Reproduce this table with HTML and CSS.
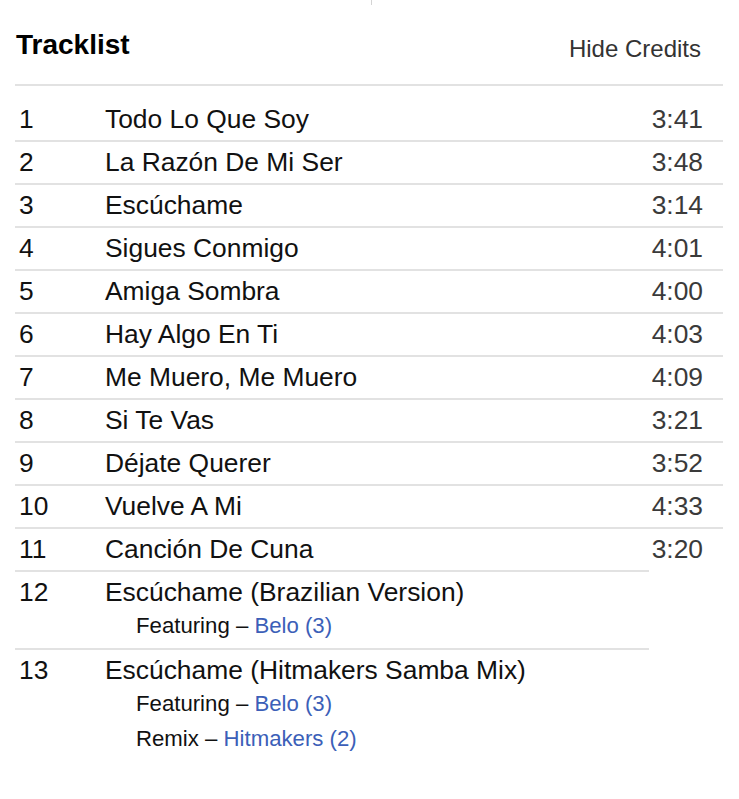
FILE: index.html
```html
<!DOCTYPE html>
<html lang="es">
<head>
<meta charset="utf-8">
<title>Tracklist</title>
<link rel="stylesheet" href="styles.css">
</head>
<body>
<div class="page">
  <div class="tick"></div>
  <header class="head">
    <h2 class="title">Tracklist</h2>
    <span class="toggle">Hide Credits</span>
  </header>
  <div class="tracks">
    <div class="num first">1</div><div class="name first">Todo Lo Que Soy</div><div class="dur first">3:41</div>
    <div class="num">2</div><div class="name">La Razón De Mi Ser</div><div class="dur">3:48</div>
    <div class="num">3</div><div class="name">Escúchame</div><div class="dur">3:14</div>
    <div class="num">4</div><div class="name">Sigues Conmigo</div><div class="dur">4:01</div>
    <div class="num">5</div><div class="name">Amiga Sombra</div><div class="dur">4:00</div>
    <div class="num">6</div><div class="name">Hay Algo En Ti</div><div class="dur">4:03</div>
    <div class="num">7</div><div class="name">Me Muero, Me Muero</div><div class="dur">4:09</div>
    <div class="num">8</div><div class="name">Si Te Vas</div><div class="dur">3:21</div>
    <div class="num">9</div><div class="name">Déjate Querer</div><div class="dur">3:52</div>
    <div class="num">10</div><div class="name">Vuelve A Mi</div><div class="dur">4:33</div>
    <div class="num">11</div><div class="name">Canción De Cuna</div><div class="dur">3:20</div>
    <div class="num">12</div>
    <div class="name">Escúchame (Brazilian Version)
      <div class="credits">
        <div class="credit">Featuring – <span class="link">Belo (3)</span></div>
      </div>
    </div>
    <div class="dur empty"></div>
    <div class="num">13</div>
    <div class="name">Escúchame (Hitmakers Samba Mix)
      <div class="credits">
        <div class="credit">Featuring – <span class="link">Belo (3)</span></div>
        <div class="credit">Remix – <span class="link">Hitmakers (2)</span></div>
      </div>
    </div>
    <div class="dur empty"></div>
  </div>
</div>
</body>
</html>
```
FILE: styles.css
```css
html, body {
  margin: 0;
  padding: 0;
  background: #fff;
}
body {
  font-family: "Liberation Sans", Arial, sans-serif;
  color: #111;
}
.page {
  position: relative;
  width: 708px;
  margin-left: 15px;
}
.tick {
  position: absolute;
  left: 356px;
  top: 0;
  width: 1px;
  height: 5px;
  background: #d4d4d4;
}
.head {
  display: flex;
  justify-content: space-between;
  align-items: center;
  height: 84px;
  border-bottom: 2px solid #e2e2e2;
}
.title {
  margin: 0 0 0 1px;
  font-size: 28px;
  font-weight: bold;
  letter-spacing: 0;
  position: relative;
  top: 3px;
  color: #000;
}
.toggle {
  font-size: 24px;
  color: #333;
  margin-right: 22px;
  position: relative;
  top: 7px;
}
.tracks {
  display: grid;
  grid-template-columns: 90px 1fr 74px;
  font-size: 26.4px;
}
.tracks > div {
  border-top: 2px solid #e2e2e2;
  line-height: 41px;
}
.tracks > .first {
  border-top: none;
  padding-top: 13px;
}
.tracks > .empty {
  border-top: none;
}
.num {
  padding-left: 4px;
  color: #111;
}
.name {
  color: #111;
}
.dur {
  text-align: right;
  padding-right: 20px;
  color: #3a3a3a;
}
.credits {
  margin: -5px 0 0 31px;
  padding-bottom: 5px;
  font-size: 22.2px;
}
.credit {
  line-height: 35px;
}
.link {
  color: #3c5fb8;
}
```
